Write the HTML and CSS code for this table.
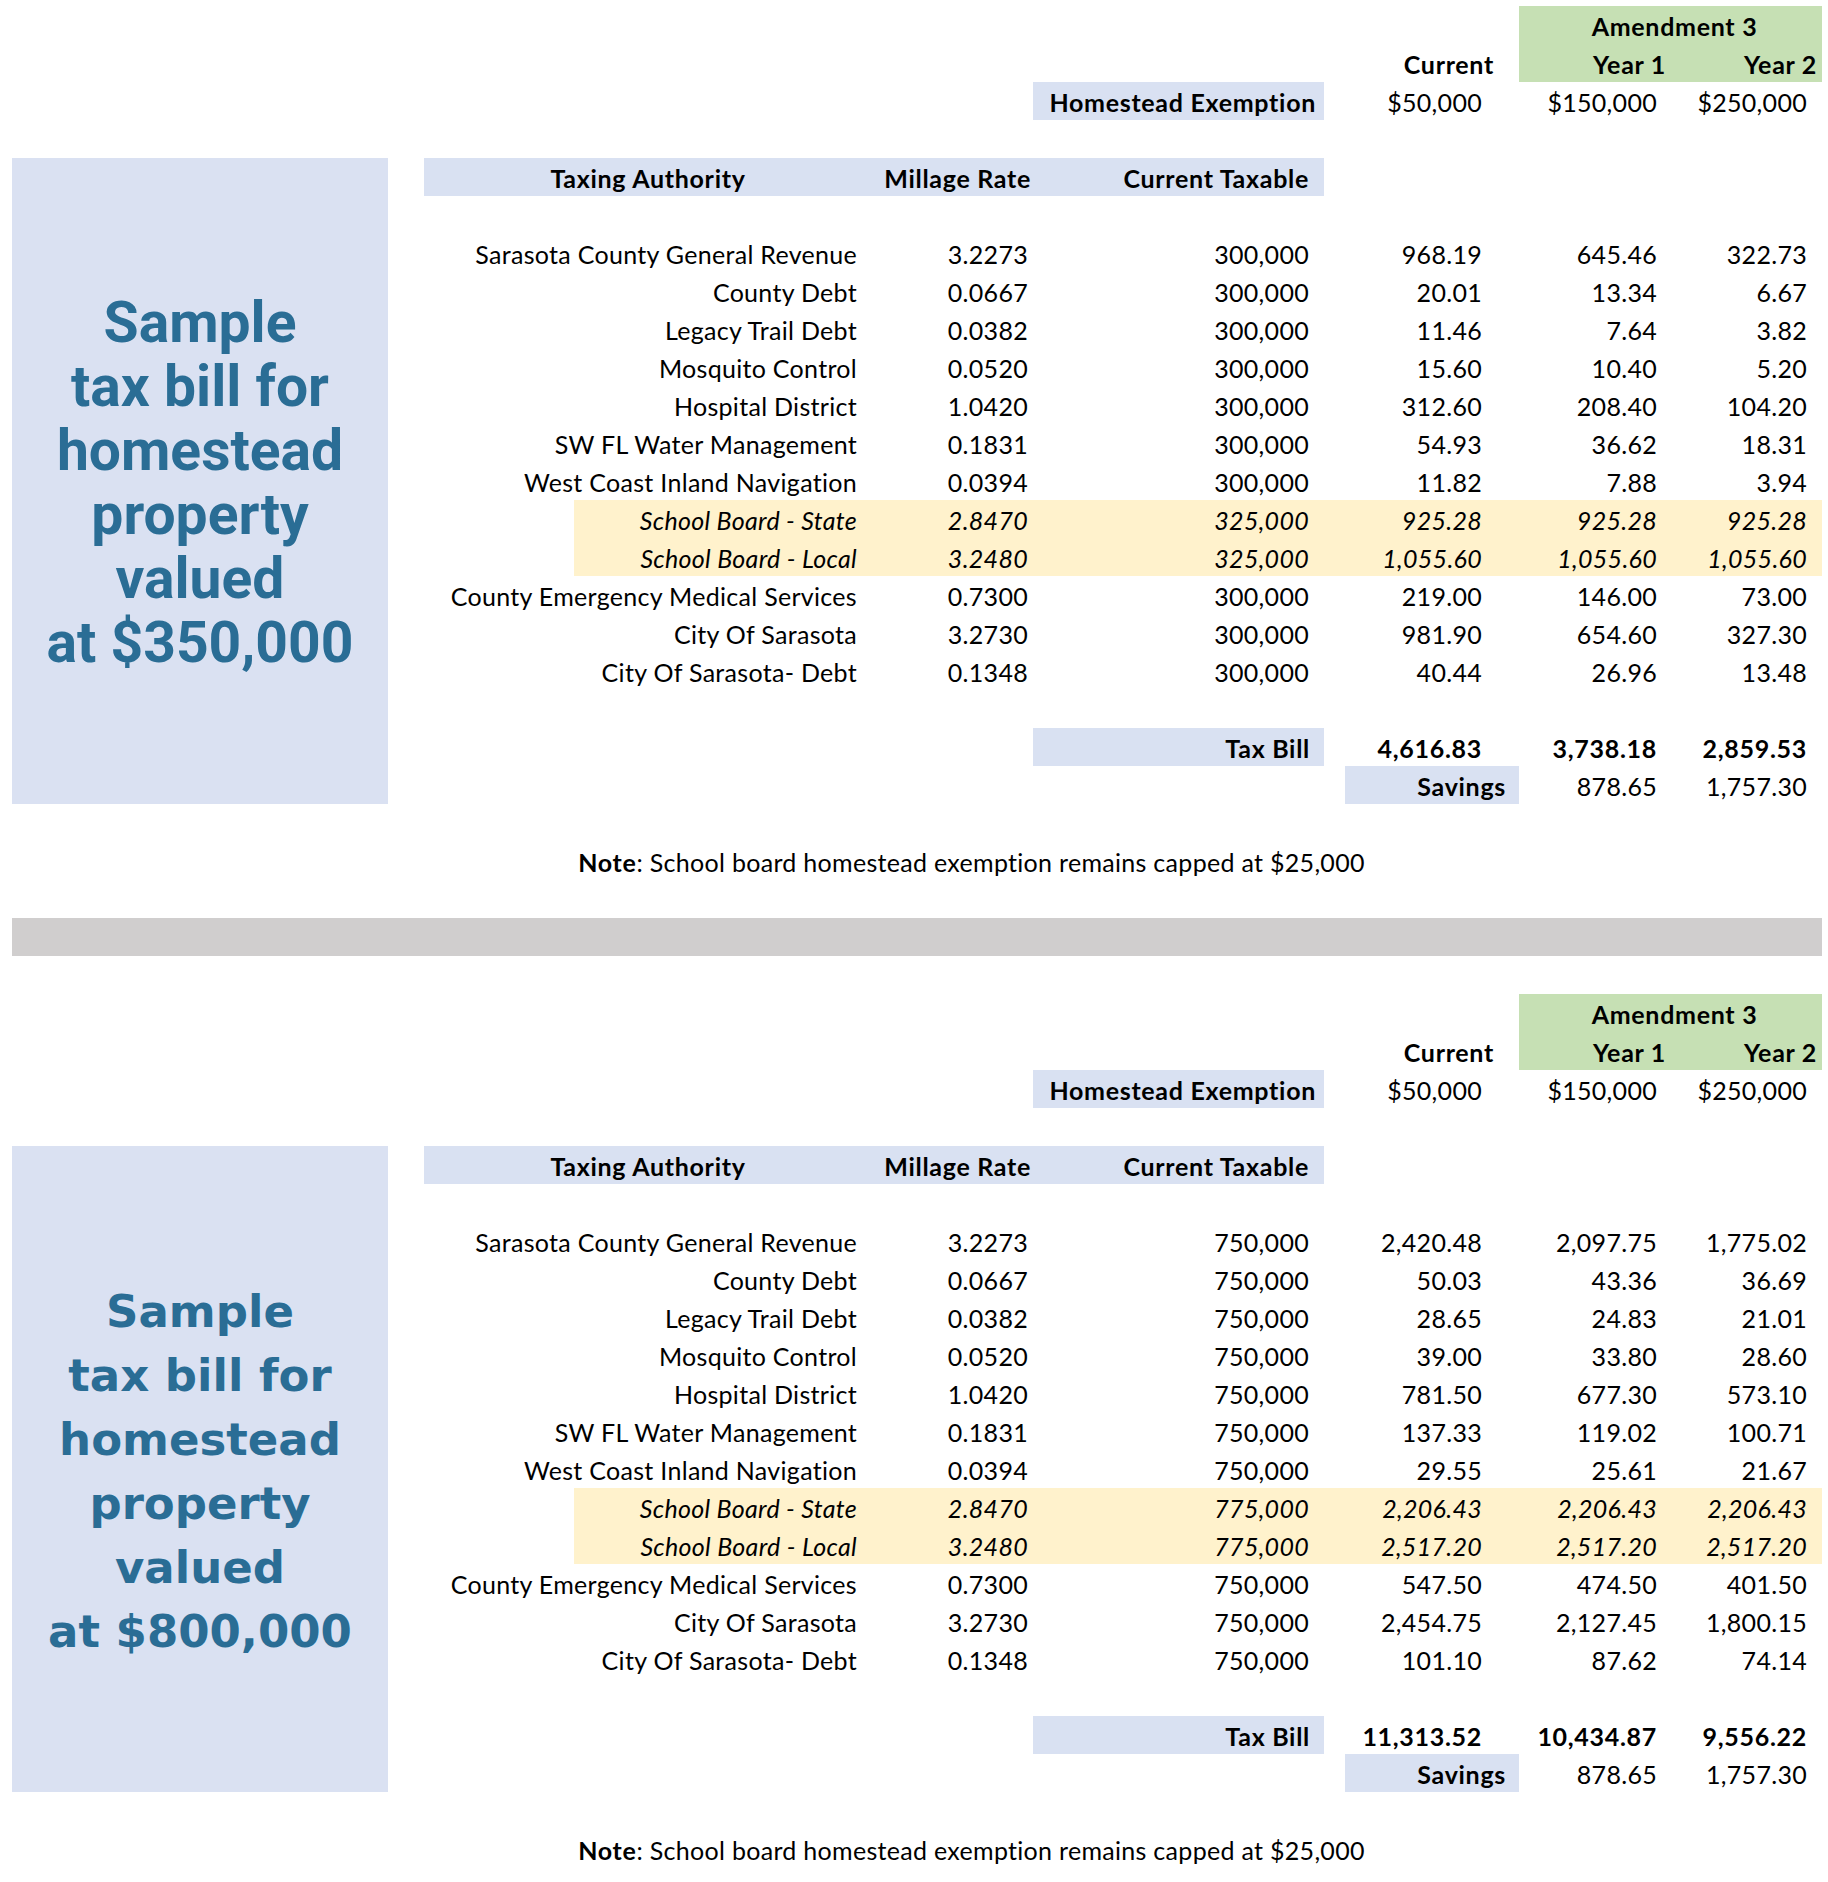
FILE: index.html
```html
<!DOCTYPE html>
<html lang="en">
<head>
<meta charset="utf-8">
<title>Sample tax bill</title>
<link rel="stylesheet" href="styles.css">
</head>
<body>
<div class="page">
  <section class="sheet">
    <div class="title-box"><p class="title t1">Sample<br>tax bill for<br>homestead<br>property<br>valued<br>at $350,000</p></div>
    <div class="table">
      <div class="row"><div class="cell amend">Amendment 3</div></div>
      <div class="row"><div class="cell b cur pad-cur-h">Current</div><div class="cell b y1 green pad-yh">Year 1</div><div class="cell b y2 green pad-yh2">Year 2</div></div>
      <div class="row"><div class="cell b tax box pad-home">Homestead Exemption</div><div class="cell cur">$50,000</div><div class="cell y1">$150,000</div><div class="cell y2">$250,000</div></div>
      <div class="row"></div>
      <div class="row band"><div class="cell b authh">Taxing Authority</div><div class="cell b mill pad-millh">Millage Rate</div><div class="cell b tax">Current Taxable</div></div>
      <div class="row"></div>
      <div class="row"><div class="cell auth">Sarasota County General Revenue</div><div class="cell mill">3.2273</div><div class="cell tax">300,000</div><div class="cell cur">968.19</div><div class="cell y1">645.46</div><div class="cell y2">322.73</div></div>
      <div class="row"><div class="cell auth">County Debt</div><div class="cell mill">0.0667</div><div class="cell tax">300,000</div><div class="cell cur">20.01</div><div class="cell y1">13.34</div><div class="cell y2">6.67</div></div>
      <div class="row"><div class="cell auth">Legacy Trail Debt</div><div class="cell mill">0.0382</div><div class="cell tax">300,000</div><div class="cell cur">11.46</div><div class="cell y1">7.64</div><div class="cell y2">3.82</div></div>
      <div class="row"><div class="cell auth">Mosquito Control</div><div class="cell mill">0.0520</div><div class="cell tax">300,000</div><div class="cell cur">15.60</div><div class="cell y1">10.40</div><div class="cell y2">5.20</div></div>
      <div class="row"><div class="cell auth">Hospital District</div><div class="cell mill">1.0420</div><div class="cell tax">300,000</div><div class="cell cur">312.60</div><div class="cell y1">208.40</div><div class="cell y2">104.20</div></div>
      <div class="row"><div class="cell auth">SW FL Water Management</div><div class="cell mill">0.1831</div><div class="cell tax">300,000</div><div class="cell cur">54.93</div><div class="cell y1">36.62</div><div class="cell y2">18.31</div></div>
      <div class="row"><div class="cell auth">West Coast Inland Navigation</div><div class="cell mill">0.0394</div><div class="cell tax">300,000</div><div class="cell cur">11.82</div><div class="cell y1">7.88</div><div class="cell y2">3.94</div></div>
      <div class="row school"><div class="cell auth">School Board - State</div><div class="cell mill">2.8470</div><div class="cell tax">325,000</div><div class="cell cur">925.28</div><div class="cell y1">925.28</div><div class="cell y2">925.28</div></div>
      <div class="row school"><div class="cell auth">School Board - Local</div><div class="cell mill">3.2480</div><div class="cell tax">325,000</div><div class="cell cur">1,055.60</div><div class="cell y1">1,055.60</div><div class="cell y2">1,055.60</div></div>
      <div class="row"><div class="cell auth">County Emergency Medical Services</div><div class="cell mill">0.7300</div><div class="cell tax">300,000</div><div class="cell cur">219.00</div><div class="cell y1">146.00</div><div class="cell y2">73.00</div></div>
      <div class="row"><div class="cell auth">City Of Sarasota</div><div class="cell mill">3.2730</div><div class="cell tax">300,000</div><div class="cell cur">981.90</div><div class="cell y1">654.60</div><div class="cell y2">327.30</div></div>
      <div class="row"><div class="cell auth">City Of Sarasota- Debt</div><div class="cell mill">0.1348</div><div class="cell tax">300,000</div><div class="cell cur">40.44</div><div class="cell y1">26.96</div><div class="cell y2">13.48</div></div>
      <div class="row"></div>
      <div class="row"><div class="cell b tax box pad-bill">Tax Bill</div><div class="cell b cur">4,616.83</div><div class="cell b y1">3,738.18</div><div class="cell b y2">2,859.53</div></div>
      <div class="row"><div class="cell b cur box pad-sav">Savings</div><div class="cell y1">878.65</div><div class="cell y2">1,757.30</div></div>
      <div class="row"></div>
      <div class="row"><div class="cell note"><b>Note</b>: School board homestead exemption remains capped at $25,000</div></div>
    </div>
  </section>

  <div class="divider"></div>

  <section class="sheet">
    <div class="title-box"><p class="title t2">Sample<br>tax bill for<br>homestead<br>property<br>valued<br>at $800,000</p></div>
    <div class="table">
      <div class="row"><div class="cell amend">Amendment 3</div></div>
      <div class="row"><div class="cell b cur pad-cur-h">Current</div><div class="cell b y1 green pad-yh">Year 1</div><div class="cell b y2 green pad-yh2">Year 2</div></div>
      <div class="row"><div class="cell b tax box pad-home">Homestead Exemption</div><div class="cell cur">$50,000</div><div class="cell y1">$150,000</div><div class="cell y2">$250,000</div></div>
      <div class="row"></div>
      <div class="row band"><div class="cell b authh">Taxing Authority</div><div class="cell b mill pad-millh">Millage Rate</div><div class="cell b tax">Current Taxable</div></div>
      <div class="row"></div>
      <div class="row"><div class="cell auth">Sarasota County General Revenue</div><div class="cell mill">3.2273</div><div class="cell tax">750,000</div><div class="cell cur">2,420.48</div><div class="cell y1">2,097.75</div><div class="cell y2">1,775.02</div></div>
      <div class="row"><div class="cell auth">County Debt</div><div class="cell mill">0.0667</div><div class="cell tax">750,000</div><div class="cell cur">50.03</div><div class="cell y1">43.36</div><div class="cell y2">36.69</div></div>
      <div class="row"><div class="cell auth">Legacy Trail Debt</div><div class="cell mill">0.0382</div><div class="cell tax">750,000</div><div class="cell cur">28.65</div><div class="cell y1">24.83</div><div class="cell y2">21.01</div></div>
      <div class="row"><div class="cell auth">Mosquito Control</div><div class="cell mill">0.0520</div><div class="cell tax">750,000</div><div class="cell cur">39.00</div><div class="cell y1">33.80</div><div class="cell y2">28.60</div></div>
      <div class="row"><div class="cell auth">Hospital District</div><div class="cell mill">1.0420</div><div class="cell tax">750,000</div><div class="cell cur">781.50</div><div class="cell y1">677.30</div><div class="cell y2">573.10</div></div>
      <div class="row"><div class="cell auth">SW FL Water Management</div><div class="cell mill">0.1831</div><div class="cell tax">750,000</div><div class="cell cur">137.33</div><div class="cell y1">119.02</div><div class="cell y2">100.71</div></div>
      <div class="row"><div class="cell auth">West Coast Inland Navigation</div><div class="cell mill">0.0394</div><div class="cell tax">750,000</div><div class="cell cur">29.55</div><div class="cell y1">25.61</div><div class="cell y2">21.67</div></div>
      <div class="row school"><div class="cell auth">School Board - State</div><div class="cell mill">2.8470</div><div class="cell tax">775,000</div><div class="cell cur">2,206.43</div><div class="cell y1">2,206.43</div><div class="cell y2">2,206.43</div></div>
      <div class="row school"><div class="cell auth">School Board - Local</div><div class="cell mill">3.2480</div><div class="cell tax">775,000</div><div class="cell cur">2,517.20</div><div class="cell y1">2,517.20</div><div class="cell y2">2,517.20</div></div>
      <div class="row"><div class="cell auth">County Emergency Medical Services</div><div class="cell mill">0.7300</div><div class="cell tax">750,000</div><div class="cell cur">547.50</div><div class="cell y1">474.50</div><div class="cell y2">401.50</div></div>
      <div class="row"><div class="cell auth">City Of Sarasota</div><div class="cell mill">3.2730</div><div class="cell tax">750,000</div><div class="cell cur">2,454.75</div><div class="cell y1">2,127.45</div><div class="cell y2">1,800.15</div></div>
      <div class="row"><div class="cell auth">City Of Sarasota- Debt</div><div class="cell mill">0.1348</div><div class="cell tax">750,000</div><div class="cell cur">101.10</div><div class="cell y1">87.62</div><div class="cell y2">74.14</div></div>
      <div class="row"></div>
      <div class="row"><div class="cell b tax box pad-bill">Tax Bill</div><div class="cell b cur">11,313.52</div><div class="cell b y1">10,434.87</div><div class="cell b y2">9,556.22</div></div>
      <div class="row"><div class="cell b cur box pad-sav">Savings</div><div class="cell y1">878.65</div><div class="cell y2">1,757.30</div></div>
      <div class="row"></div>
      <div class="row"><div class="cell note"><b>Note</b>: School board homestead exemption remains capped at $25,000</div></div>
    </div>
  </section>
</div>
</body>
</html>
```

FILE: styles.css
```css
html, body {
  margin: 0;
  padding: 0;
  background: #ffffff;
}

.page {
  padding: 6px 0 0 12px;
  width: 1810px;
  font-family: Lato, "Liberation Sans", sans-serif;
  font-size: 25px;
  letter-spacing: 0.3px;
  color: #000;
}

.sheet {
  display: flex;
  align-items: flex-start;
}

.title-box {
  flex: none;
  width: 376px;
  height: 646px;
  margin-top: 152px;
  margin-right: 36px;
  background: #dae1f2;
  display: flex;
  align-items: center;
  justify-content: center;
}

.title {
  margin: 0;
  text-align: center;
  color: #2a6d95;
  line-height: 64px;
  letter-spacing: 0;
}

.t1 {
  font-family: Roboto, "Liberation Sans", sans-serif;
  font-weight: 700;
  font-size: 57px;
  padding-top: 4px;
}

.t2 {
  font-family: "DejaVu Sans", "Liberation Sans", sans-serif;
  font-weight: 700;
  font-size: 45px;
  padding-top: 6px;
}

.table {
  flex: none;
  width: 1398px;
  display: flex;
  flex-direction: column;
}

.row {
  height: 38px;
  display: grid;
  grid-template-columns: 150px 298px 161px 291px 21px 174px 153px 150px;
  grid-template-rows: 38px;
}

.row.band {
  background: linear-gradient(90deg, #d9e1f2 900px, transparent 900px);
}

.row.school {
  background: linear-gradient(90deg, transparent 150px, #fff2cc 150px);
  font-style: italic;
}

.cell {
  display: flex;
  align-items: center;
  justify-content: flex-end;
  padding: 1px 15px 0 0;
  white-space: nowrap;
  box-sizing: border-box;
  height: 38px;
}

.b { font-weight: 700; letter-spacing: 0.7px; }

.auth { grid-column: 2 / 3; }
.authh { grid-column: 1 / 3; justify-content: center; padding-left: 0; padding-right: 0; }
.mill { grid-column: 3 / 4; padding-right: 5px; }
.tax { grid-column: 4 / 5; }
.cur { grid-column: 6 / 7; padding-right: 37px; }
.y1 { grid-column: 7 / 8; }
.y2 { grid-column: 8 / 9; }

.amend {
  grid-column: 7 / 9;
  justify-content: center;
  padding-right: 0;
  padding-left: 8px;
  font-weight: 700;
  letter-spacing: 0.7px;
  background: #c6e0b4;
}

.green { background: #c6e0b4; }
.box { background: #d9e1f2; }

.pad-millh { padding-right: 2px; }
.pad-home { padding-right: 8px; }
.pad-bill { padding-right: 14px; }
.pad-cur-h { padding-right: 25px; }
.pad-sav { padding-right: 13px; }
.pad-yh { padding-right: 6px; }
.pad-yh2 { padding-right: 5px; }

.note {
  grid-column: 1 / 7;
  justify-content: center;
  padding-right: 0;
}

.note b { font-weight: 700; letter-spacing: 0.7px; }

.divider {
  height: 38px;
  margin: 38px 0;
  background: #d0cece;
}
```
